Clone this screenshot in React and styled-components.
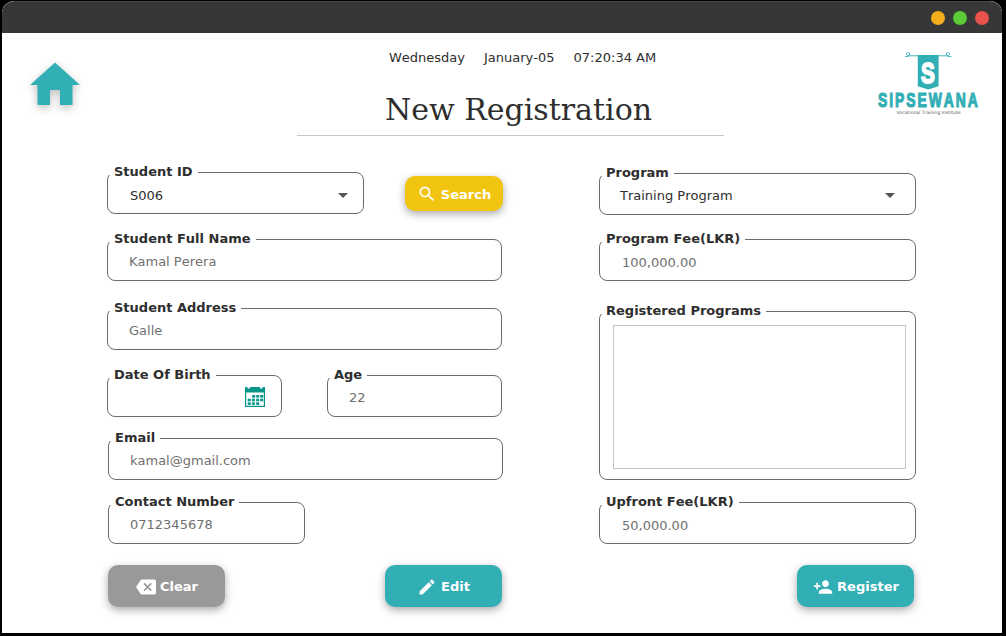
import React from "react";
import styled, { createGlobalStyle } from "styled-components";
import { MdHome, MdSearch, MdBackspace, MdEdit, MdPersonAdd } from "react-icons/md";

const GlobalStyle = createGlobalStyle`
  * { box-sizing: border-box; }
  html, body { margin: 0; padding: 0; background: #000; overflow: hidden; }
  body { font-family: "DejaVu Sans", sans-serif; font-size: 13px; font-kerning: none; color: #2e2e2e; }
`;

const Desktop = styled.div`
  width: 1006px;
  height: 636px;
  padding: 1px 4px 3px 2px;
  background: #000;
`;

const Window = styled.main`
  display: flex;
  flex-direction: column;
  height: 632px;
  background: #fff;
  border-radius: 12px 12px 0 0;
  overflow: hidden;
`;

const TitleBar = styled.div`
  display: flex;
  justify-content: flex-end;
  align-items: center;
  gap: 8px;
  height: 32px;
  flex: none;
  padding-right: 13px;
  background: #373737;
  border-top: 1px solid #4a4a4a;
  border-radius: 12px 12px 0 0;
`;

const WindowDot = styled.span`
  width: 14px;
  height: 14px;
  border-radius: 50%;
  background: ${(p) => p.$color};
`;

const Header = styled.header`
  display: flex;
  height: 103px;
  flex: none;
  padding-left: 23px;
`;

const HomeButton = styled.a`
  display: block;
  width: 60px;
  height: 60px;
  margin-top: 22px;
  color: #32aeb5;
  font-size: 60px;
  line-height: 0;
  filter: drop-shadow(0 3px 4px rgba(0, 0, 0, 0.26));
`;

const Heading = styled.div`
  width: 427px;
  margin-left: 212px;
  padding-top: 16px;
  border-bottom: 1px solid #c8c8c8;
`;

const DateLine = styled.div`
  display: flex;
  gap: 19px;
  padding-left: 92px;
  line-height: 18px;
  white-space: nowrap;
`;

const Title = styled.h1`
  margin: 23px 0 0;
  padding-left: 16px;
  font: 400 30px/40px "DejaVu Serif", serif;
  font-kerning: auto;
  text-align: center;
`;

const Logo = styled.svg`
  display: block;
  width: 104px;
  height: 68px;
  margin: 16px 0 0 152px;
`;

const Form = styled.form`
  display: flex;
  gap: 96px;
  padding-left: 105px;
`;

const Column = styled.section`
  display: flex;
  flex-direction: column;
  width: ${(p) => p.$width}px;
  padding-top: ${(p) => p.$top}px;
`;

const Row = styled.div`
  display: flex;
  justify-content: ${(p) => p.$justify || "space-between"};
  align-items: flex-start;
  margin-top: ${(p) => p.$before || 0}px;
  padding-left: ${(p) => p.$left || 0}px;
  padding-right: ${(p) => p.$right || 0}px;
`;

const FieldBox = styled.div`
  position: relative;
  display: flex;
  align-items: center;
  justify-content: space-between;
  width: ${(p) => p.$width}px;
  height: ${(p) => p.$height || 42}px;
  padding: ${(p) => p.$padding || "3px 15px 0 21px"};
  border: 1px solid #6c6c6c;
  border-radius: 8px;
`;

const FieldLabel = styled.label`
  position: absolute;
  top: -10px;
  left: 1px;
  height: 12px;
  padding: 0 5px;
  background: #fff;
  font-weight: 700;
  line-height: 17px;
  white-space: nowrap;
`;

const Value = styled.span`
  line-height: 16px;
  color: ${(p) => (p.$dark ? "#2e2e2e" : "#707070")};
`;

const Arrow = styled.span`
  border: 5px solid transparent;
  border-top-color: #555;
  border-bottom: 0;
`;

const ProgramList = styled.div`
  width: 293px;
  height: 144px;
  border: 1px solid #c4c4c4;
`;

const Button = styled.button`
  display: flex;
  align-items: center;
  justify-content: center;
  gap: 4px;
  width: ${(p) => p.$width || 117}px;
  height: ${(p) => p.$height || 42}px;
  margin: ${(p) => p.$margin || 0};
  padding: 1px 0 0 ${(p) => p.$shift || 0}px;
  border: 0;
  border-radius: 10px;
  background: ${(p) => p.$color || "#32aeb5"};
  box-shadow: 0 3px 8px rgba(0, 0, 0, 0.34);
  color: #fff;
  font: 700 13px/18px "DejaVu Sans", sans-serif;
  svg { width: 20px; height: 20px; flex: none; }
`;

const ButtonText = styled.span`
  padding-top: 1px;
`;

const days = [
  [8, 8], [12, 8], [16, 8],
  [3.5, 11.7], [7.7, 11.7], [12, 11.7], [16, 11.7],
  [3.5, 15.3], [7.7, 15.3], [12, 15.3],
];

function CalendarIcon() {
  return (
    <svg width="20" height="20" viewBox="0 0 20 20">
      <path fill="#07958a" d="M0 0h2.500v1.500h2.500V0h10v1.500h2.500V0H20v20H0zM1.200 5.500v13.300h17.600V5.500z" fillRule="evenodd" />
      {days.map(([x, y]) => (
        <rect key={`${x}-${y}`} x={x - 0.8} y={y} width="3" height="2.6" fill="#07958a" />
      ))}
    </svg>
  );
}

function SipsewanaLogo() {
  return (
    <Logo viewBox="876 49 104 68">
      <path fill="none" stroke="#32aeb5" strokeWidth="0.9" d="M905 56.500h2.500c2.500 0 3-4 .7-4s-2.200 2.800 0 3.300h39.600c2.200-.5 2.300-3.300 0-3.300s-1.800 4 .7 4h2.800" />
      <path fill="#32aeb5" d="M917.800 55h20.800v31.200L928.200 89.500l-10.400-3.300z" />
      <text transform="translate(928 82.800) scale(.7 1)" textAnchor="middle" fill="#fff" stroke="#fff" strokeWidth="1.800" fontFamily="Liberation Sans, sans-serif" fontWeight="700" fontSize="29.500">S</text>
      <text transform="translate(878 106.800) scale(.66 1)" fill="#32aeb5" stroke="#32aeb5" strokeWidth="1.200" fontFamily="Liberation Sans, sans-serif" fontWeight="700" fontSize="21" letterSpacing="3">SIPSEWANA</text>
      <text x="896.500" y="113.800" fill="#555" fontFamily="DejaVu Sans, sans-serif" fontSize="4.500" textLength="64" lengthAdjust="spacing">Vocational Training Institute</text>
    </Logo>
  );
}

function Field({ label, value, dark, arrow, children, ...box }) {
  return (
    <FieldBox {...box}>
      <FieldLabel>{label}</FieldLabel>
      {children || <Value $dark={dark}>{value}</Value>}
      {arrow && <Arrow />}
    </FieldBox>
  );
}

export default function App() {
  return (
    <Desktop>
      <GlobalStyle />
      <Window>
        <TitleBar>
          <WindowDot $color="#f2ae1b" />
          <WindowDot $color="#5bcb36" />
          <WindowDot $color="#e9524b" />
        </TitleBar>
        <Header>
          <HomeButton><MdHome /></HomeButton>
          <Heading>
            <DateLine>
              <span>Wednesday</span>
              <span>January-05</span>
              <span>07:20:34 AM</span>
            </DateLine>
            <Title>New Registration</Title>
          </Heading>
          <SipsewanaLogo />
        </Header>
        <Form>
          <Column $width={396} $top={36}>
            <Row>
              <Field label="Student ID" value="S006" dark arrow $width={257} $padding="5px 15px 0 22px" />
              <Button type="button" $color="#f1c40f" $width={98} $height={35} $margin="4px 0 0">
                <MdSearch /><ButtonText>Search</ButtonText>
              </Button>
            </Row>
            <Row $before={25}>
              <Field label="Student Full Name" value="Kamal Perera" $width={395} />
            </Row>
            <Row $before={27}>
              <Field label="Student Address" value="Galle" $width={395} />
            </Row>
            <Row $before={25} $right={1}>
              <Field label="Date Of Birth" $width={175} $padding="2px 16px 0 137px">
                <CalendarIcon />
              </Field>
              <Field label="Age" value="22" $width={175} />
            </Row>
            <Row $before={21} $left={1}>
              <Field label="Email" value="kamal@gmail.com" $width={395} />
            </Row>
            <Row $before={22} $left={1}>
              <Field label="Contact Number" value="0712345678" $width={197} />
            </Row>
            <Row $before={21} $left={1} $right={1}>
              <Button type="button" $color="#999" $shift={1}><MdBackspace /><ButtonText>Clear</ButtonText></Button>
              <Button type="button"><MdEdit /><ButtonText>Edit</ButtonText></Button>
            </Row>
          </Column>
          <Column $width={317} $top={37}>
            <Field label="Program" value="Training Program" dark arrow $width={317} $padding="3px 20px 0 20px" />
            <Row $before={24}>
              <Field label="Program Fee(LKR)" value="100,000.00" $width={317} $padding="5px 15px 0 22px" />
            </Row>
            <Row $before={30}>
              <Field label="Registered Programs" $width={317} $height={169} $padding="3px 9px 0 13px">
                <ProgramList />
              </Field>
            </Row>
            <Row $before={22}>
              <Field label="Upfront Fee(LKR)" value="50,000.00" $width={317} $padding="5px 15px 0 22px" />
            </Row>
            <Row $before={21} $right={2} $justify="flex-end">
              <Button type="button" $shift={1}><MdPersonAdd /><ButtonText>Register</ButtonText></Button>
            </Row>
          </Column>
        </Form>
      </Window>
    </Desktop>
  );
}
